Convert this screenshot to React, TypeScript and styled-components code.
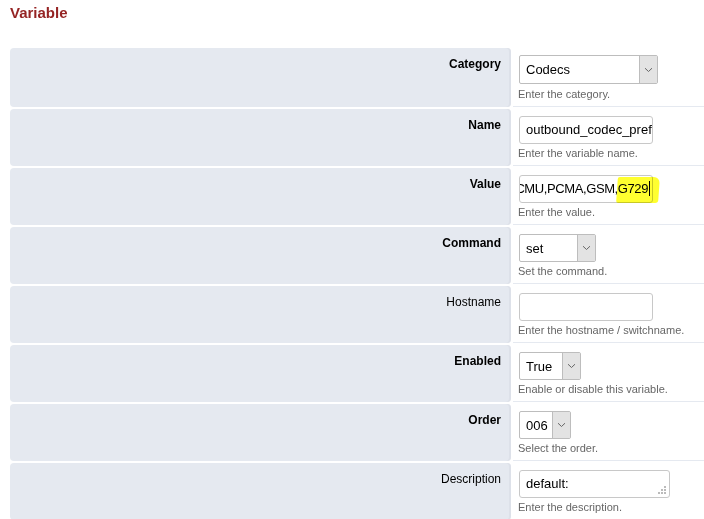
import React from "react";
import styled, { createGlobalStyle } from "styled-components";

const Global = createGlobalStyle`
  html, body { margin: 0; padding: 0; background: #fff; }
  body { font-family: "Liberation Sans", Arial, sans-serif; overflow: hidden; }
`;

const Page = styled.div`
  padding: 0 0 0 10px;
  width: 704px;
  box-sizing: border-box;
`;

const Title = styled.h1`
  margin: 0;
  padding-top: 4px;
  height: 48px;
  box-sizing: border-box;
  font-size: 15px;
  line-height: 17px;
  font-weight: bold;
  color: #952424;
`;

const Form = styled.div`
  display: grid;
  grid-template-columns: 501px 1fr;
  column-gap: 2px;
  row-gap: 2px;
`;

const Label = styled.div<{ $req?: boolean }>`
  background: #e5e9f0;
  border-radius: 4px;
  box-shadow: inset -2px 0 0 #dde1e9;
  text-align: right;
  padding: 9px 10px 0 0;
  font-size: 12px;
  line-height: 14px;
  font-weight: ${(p) => (p.$req ? "bold" : "normal")};
  color: #000;
`;

const Field = styled.div`
  border-bottom: 1px solid #e5e9f0;
  padding: 7px 0 5px 6px;
  min-height: 57px;
  box-sizing: border-box;
`;

const Help = styled.div<{ $gap?: number }>`
  font-size: 11px;
  line-height: 13px;
  color: #666;
  margin-top: ${(p) => p.$gap ?? 3}px;
  margin-left: -1px;
`;

const InputBox = styled.div<{ $w: number }>`
  width: ${(p) => p.$w}px;
  height: 28px;
  box-sizing: border-box;
  border: 1px solid #c8c8c8;
  border-radius: 3px;
  background: #fff;
  font-size: 13px;
  line-height: 26px;
  padding: 0 6px;
  color: #000;
  white-space: nowrap;
  overflow: hidden;
  display: flex;
  align-items: center;
  position: relative;
`;

const Scrolled = styled(InputBox)`
  justify-content: flex-end;
  overflow: visible;
  padding: 0 2px 0 0;
  letter-spacing: -0.4px;
`;

const Clip = styled.div`
  overflow: hidden;
  display: flex;
  justify-content: flex-end;
  width: 100%;
`;

const Highlight = styled.div`
  position: absolute;
  left: 97px;
  top: 1px;
  width: 42px;
  height: 26px;
  background: #ffff30;
  mix-blend-mode: multiply;
  border-radius: 2px 6px 3px 2px;
  transform: skewX(-4deg);
`;

const Caret = styled.span`
  display: inline-block;
  width: 1px;
  height: 15px;
  background: #000;
  vertical-align: -3px;
  margin-left: 1px;
`;

const SelectBox = styled.div<{ $w: number; $h?: number }>`
  width: ${(p) => p.$w}px;
  height: ${(p) => p.$h ?? 28}px;
  box-sizing: border-box;
  border: 1px solid #bdbdbd;
  border-radius: 2px;
  background: #fff;
  display: flex;
  font-size: 13px;
  color: #000;
`;

const SelectText = styled.div`
  flex: 1;
  padding-left: 6px;
  display: flex;
  align-items: center;
`;

const SelectBtn = styled.div`
  width: 17px;
  background: #e3e3e3;
  border-left: 1px solid #bdbdbd;
  display: flex;
  align-items: center;
  justify-content: center;
`;

const Grip = styled.svg`
  position: absolute;
  right: 3px;
  bottom: 3px;
`;

const Chevron = () => (
  <svg width="9" height="6" viewBox="0 0 9 6">
    <path d="M1 1.2 L4.5 4.5 L8 1.2" fill="none" stroke="#666" strokeWidth="1" />
  </svg>
);

const Select = ({ w, value, h }: { w: number; value: string; h?: number }) => (
  <SelectBox $w={w} $h={h}>
    <SelectText>{value}</SelectText>
    <SelectBtn>
      <Chevron />
    </SelectBtn>
  </SelectBox>
);

export default function App() {
  return (
    <Page>
      <Global />
      <Title>Variable</Title>
      <Form>
        <Label $req>Category</Label>
        <Field>
          <Select w={139} h={29} value="Codecs" />
          <Help $gap={4}>Enter the category.</Help>
        </Field>

        <Label $req>Name</Label>
        <Field>
          <InputBox $w={134}>outbound_codec_pref</InputBox>
          <Help>Enter the variable name.</Help>
        </Field>

        <Label $req>Value</Label>
        <Field>
          <Scrolled $w={134}>
            <Clip>
              <span>
                PCMU,PCMA,GSM,G729<Caret />
              </span>
            </Clip>
            <Highlight />
          </Scrolled>
          <Help>Enter the value.</Help>
        </Field>

        <Label $req>Command</Label>
        <Field>
          <Select w={77} value="set" />
          <Help>Set the command.</Help>
        </Field>

        <Label>Hostname</Label>
        <Field>
          <InputBox $w={134} />
          <Help>Enter the hostname / switchname.</Help>
        </Field>

        <Label $req>Enabled</Label>
        <Field>
          <Select w={62} value="True" />
          <Help>Enable or disable this variable.</Help>
        </Field>

        <Label $req>Order</Label>
        <Field>
          <Select w={52} value="006" />
          <Help>Select the order.</Help>
        </Field>

        <Label>Description</Label>
        <Field>
          <InputBox $w={151}>
            default:
            <Grip width="8" height="8" viewBox="0 0 8 8">
              <rect x="6" y="0" width="2" height="2" fill="#bbb" />
              <rect x="3" y="3" width="2" height="2" fill="#bbb" />
              <rect x="6" y="3" width="2" height="2" fill="#bbb" />
              <rect x="0" y="6" width="2" height="2" fill="#bbb" />
              <rect x="3" y="6" width="2" height="2" fill="#bbb" />
              <rect x="6" y="6" width="2" height="2" fill="#bbb" />
            </Grip>
          </InputBox>
          <Help>Enter the description.</Help>
        </Field>
      </Form>
    </Page>
  );
}
